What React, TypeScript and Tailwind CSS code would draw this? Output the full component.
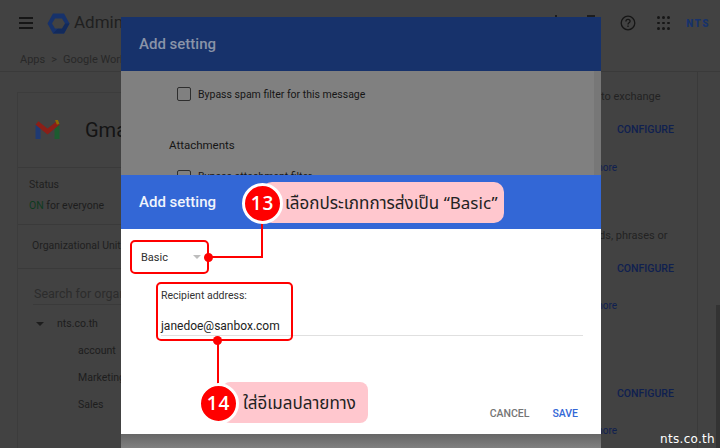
import React from 'react'

const font = { fontFamily: 'Roboto, "Noto Sans", sans-serif' }

function Hamburger() {
  return (
    <div className="flex flex-col gap-[3px] w-[14px]">
      <div className="h-[2px] bg-[#161616]" />
      <div className="h-[2px] bg-[#161616]" />
      <div className="h-[2px] bg-[#161616]" />
    </div>
  )
}

function AdminLogo() {
  return (
    <svg width="23" height="21" viewBox="0 0 23 21">
      <path d="M6 0.5h11l5.5 10-5.5 10H6L0.5 10.5z" fill="#17326b" />
      <path d="M6 20.5h11l5.5-10H16z" fill="#122a5c" />
      <path d="M8 5.5h7l3 5-3 5H8l-3-5z" fill="#424242" />
    </svg>
  )
}

function GmailLogo() {
  return (
    <svg width="26" height="20" viewBox="0 0 26 20" fill="none">
      <path d="M3 19V5" stroke="#1f3a73" strokeWidth="5" />
      <path d="M22 19V5" stroke="#1d5c30" strokeWidth="5" />
      <path d="M2 3l10.500 8.500L23 3" stroke="#8a1f17" strokeWidth="4.500" />
      <path d="M21 2.500l2.500-1" stroke="#8f6b00" strokeWidth="5" />
    </svg>
  )
}

function HelpIcon() {
  return (
    <svg width="16" height="16" viewBox="0 0 16 16" fill="none" stroke="#161616" strokeWidth="1.300">
      <circle cx="8" cy="8" r="6.800" />
      <path d="M5.900 6.400c0-1.300 1-2 2.100-2s2.100.7 2.100 1.900c0 1.500-2.100 1.600-2.100 3.200" />
      <path d="M8 10.600v1.300" />
    </svg>
  )
}

function AppsGrid() {
  return (
    <div className="grid grid-cols-3 gap-[3px] w-[12px]">
      {Array.from({ length: 9 }).map((_, i) => (
        <div key={i} className="w-[2.4px] h-[2.4px] rounded-full bg-[#161616]" />
      ))}
    </div>
  )
}

// dimmed admin console behind the dialogs
function BackgroundPage() {
  return (
    <div className="w-[720px] h-[448px] bg-[#424242] text-[#1d1d1d] text-[10.5px]" style={font}>
      <div className="h-[72px] border-b border-[#3a3a3a]">
        <div className="h-[46px] flex items-center pl-[19px]">
          <Hamburger />
          <div className="ml-[14px]"><AdminLogo /></div>
          <span className="ml-[4px] text-[17px] text-[#1f1f1f]">Admin</span>
          <div className="ml-auto mr-[10px] flex items-center">
            {/* toolbar icons mostly hidden by the dialog */}
            <div className="w-[2px] h-[16px] bg-[#1d1d1d]" />
            <div className="ml-[30px] w-[8px] h-[16px] bg-[#1d1d1d]" />
            <div className="ml-[25px]"><HelpIcon /></div>
            <div className="ml-[21px]"><AppsGrid /></div>
            <span className="ml-[17px] text-[10px] font-black tracking-[1.5px] text-[#17326b]">NTS</span>
          </div>
        </div>
        <div className="pl-[20px] pt-[6px] flex gap-[6px] text-[#282828] text-[11px]">
          <span>Apps</span>
          <span>&gt;</span>
          <span>Google Workspace</span>
        </div>
      </div>

      <div className="flex h-[376px]">
        <div className="w-[584px] ml-[17px] mt-[20px] border border-[#3c3c3c] border-b-0">
          <div className="h-[74px] flex items-center pl-[17px]">
            <GmailLogo />
            <span className="ml-[24px] text-[20px] text-[#141414]">Gmail</span>
          </div>
          <div className="h-[57px] border-t border-[#3a3a3a] pl-[11px] pt-[10px]">
            <div className="text-[#1f1f1f] leading-[14px]">Status</div>
            <div className="mt-[7px] leading-[14px]">
              <span className="text-[#0f3a1f]">ON</span> for everyone
            </div>
          </div>
          <div className="h-[44px] border-t border-[#3a3a3a] pl-[14px] pt-[14px] text-[#1f1f1f] leading-[14px] whitespace-nowrap">
            Organizational Unit
          </div>
          <div className="h-[36px] border-t border-[#3a3a3a] pl-[16px] pt-[17px] text-[12.5px] text-[#2c2c2c] leading-[16px] whitespace-nowrap">
            Search for organ
          </div>
          <div className="ml-[15px] border-t border-[#3a3a3a] pt-[12px]">
            <div className="flex items-center leading-[14px] h-[14px]">
              <div className="ml-[3px] w-0 h-0 border-x-[4px] border-x-transparent border-t-[4px] border-t-[#1d1d1d]" />
              <span className="ml-[13px]">nts.co.th</span>
            </div>
            <div className="ml-[45px] mt-[13px] flex flex-col gap-[13px] leading-[14px]">
              <span>account</span>
              <span>Marketing</span>
              <span>Sales</span>
            </div>
          </div>
        </div>

        <div className="w-[97px] border-r border-[#3a3a3a] text-[#1f1f1f]">
          <div className="mt-[18px] leading-[14px] text-[#222] text-[11px]">to exchange</div>
          <div className="mt-[19px] ml-[16px] font-medium text-[10.5px] text-[#0f2050] leading-[14px]">CONFIGURE</div>
          <div className="mt-[24px] -ml-[7px] text-[10px] text-[#0f2050] leading-[14px]">more</div>
          <div className="mt-[54px] -ml-[2px] leading-[14px] text-[#222] text-[11px]">ds, phrases or</div>
          <div className="mt-[19px] ml-[16px] font-medium text-[10.5px] text-[#0f2050] leading-[14px]">CONFIGURE</div>
          <div className="mt-[23px] -ml-[7px] text-[10px] text-[#0f2050] leading-[14px]">more</div>
          <div className="mt-[74px] ml-[16px] font-medium text-[10.5px] text-[#0f2050] leading-[14px]">CONFIGURE</div>
          <div className="mt-[23px] -ml-[7px] text-[10px] text-[#0f2050] leading-[14px]">more</div>
        </div>
        <div className="flex-1 flex flex-col justify-end">
          <div className="ml-auto w-[4px] h-[143px] bg-[#333]" />
        </div>
      </div>
    </div>
  )
}

function BackDialog() {
  return (
    <div className="absolute left-[121px] top-[17px] w-[480px] h-[431px] bg-[#808080]" style={font}>
      <div className="h-[54px] bg-[#17326b] flex items-center pl-[18px] text-[15px] font-medium text-[#8a94a8]">
        Add setting
      </div>
      <div className="absolute right-0 top-[54px] bottom-0 w-[7px] bg-[#777777]" />
      <div className="pl-[48px] pt-[16px] text-[10.5px] text-[#161616]">
        <div className="ml-[8px] flex items-center gap-[7px] h-[14px]">
          <div className="w-[14px] h-[14px] rounded-[2px] border border-[#2e2e2e]" />
          <span className="pt-[1px]">Bypass spam filter for this message</span>
        </div>
        <div className="mt-[37px] text-[11.5px] leading-[14px]">Attachments</div>
        <div className="ml-[8px] mt-[18px] flex items-center gap-[7px] h-[14px]">
          <div className="w-[14px] h-[14px] rounded-[2px] border border-[#2e2e2e]" />
          <span>Bypass attachment filter</span>
        </div>
      </div>
    </div>
  )
}

function FrontDialog() {
  return (
    <div className="absolute left-[121px] top-[175px] w-[480px] h-[259px] bg-white flex flex-col" style={font}>
      <div className="h-[54px] bg-[#3367d6] flex items-center pl-[18px] text-[15px] font-medium text-[#f0f4fc]">
        Add setting
      </div>
      <div className="pl-[20px] pt-[22px] flex items-center w-[80px] justify-between text-[11px] text-[#2e2e2e] leading-[14px]">
        <span>Basic</span>
        <div className="w-0 h-0 border-x-[4px] border-x-transparent border-t-[4px] border-t-[#bdbdbd] -mt-[3px]" />
      </div>
      <div className="ml-[40px] mr-[18px] mt-[24px]">
        <div className="text-[10.5px] text-[#333] leading-[14px]">Recipient address:</div>
        <div className="mt-[15px] pb-[1px] border-b border-[#e0e0e0] text-[12px] text-[#222] leading-[16px]">
          janedoe@sanbox.com
        </div>
      </div>
      <div className="mt-auto mb-[13px] mr-[23px] flex justify-end gap-[23px] text-[10.5px] font-medium leading-[14px]">
        <span className="text-[#757575]">CANCEL</span>
        <span className="text-[#3367d6]">SAVE</span>
      </div>
    </div>
  )
}

function StepBadge({ n, className }: { n: string; className: string }) {
  return (
    <div
      className={`absolute w-[41px] h-[41px] rounded-full bg-[#ff0000] border-[3px] border-white flex items-center justify-center text-white text-[19px] font-semibold tracking-[1px] ${className}`}
      style={{ fontFamily: '"Open Sans", sans-serif' }}
    >
      {n}
    </div>
  )
}

const thaiFont = { fontFamily: 'Tahoma, "Noto Sans Thai", "Noto Sans", "DejaVu Sans", sans-serif' }

function Annotations() {
  return (
    <>
      {/* step 13 */}
      <div className="absolute left-[130px] top-[240px] w-[79px] h-[34px] border-2 border-[#ff0000] rounded-[5px]" />
      <div className="absolute left-[204px] top-[253px] w-[9px] h-[9px] rounded-full bg-[#ff0000]" />
      <div className="absolute left-[208px] top-[256px] w-[55px] h-[2px] bg-[#ff0000]" />
      <div className="absolute left-[261px] top-[222px] w-[2px] h-[36px] bg-[#ff0000]" />
      <div
        className="absolute left-[262px] top-[182px] w-[242px] h-[41px] bg-[#ffc7ce] rounded-[10px] pl-[23px] pt-[5px] flex items-center text-[17px] text-[#222]"
        style={thaiFont}
      >
        เลือกประเภทการส่งเป็น “Basic”
      </div>
      <StepBadge n="13" className="left-[242px] top-[183px]" />

      {/* step 14 */}
      <div className="absolute left-[156px] top-[282px] w-[137px] h-[59px] border-2 border-[#ff0000] rounded-[5px]" />
      <div className="absolute left-[213px] top-[336px] w-[9px] h-[9px] rounded-full bg-[#ff0000]" />
      <div className="absolute left-[217px] top-[340px] w-[2px] h-[44px] bg-[#ff0000]" />
      <div
        className="absolute left-[222px] top-[382px] w-[146px] h-[41px] bg-[#ffc7ce] rounded-[8px] pl-[21px] pt-[5px] flex items-center text-[17px] text-[#222]"
        style={thaiFont}
      >
        ใส่อีเมลปลายทาง
      </div>
      <StepBadge n="14" className="left-[198px] top-[383px]" />
    </>
  )
}

export default function App() {
  return (
    <div className="relative w-[720px] h-[448px] overflow-hidden">
      <BackgroundPage />
      <BackDialog />
      <div className="absolute left-[121px] top-[434px] w-[480px] h-[14px] bg-gradient-to-b from-[#666666] to-[#808080]" />
      <FrontDialog />
      <Annotations />
      <div
        className="absolute right-[5px] bottom-[2px] text-[12px] tracking-[0.3px] text-white leading-[14px]"
        style={{ fontFamily: '"DejaVu Sans", sans-serif' }}
      >
        nts.co.th
      </div>
    </div>
  )
}
